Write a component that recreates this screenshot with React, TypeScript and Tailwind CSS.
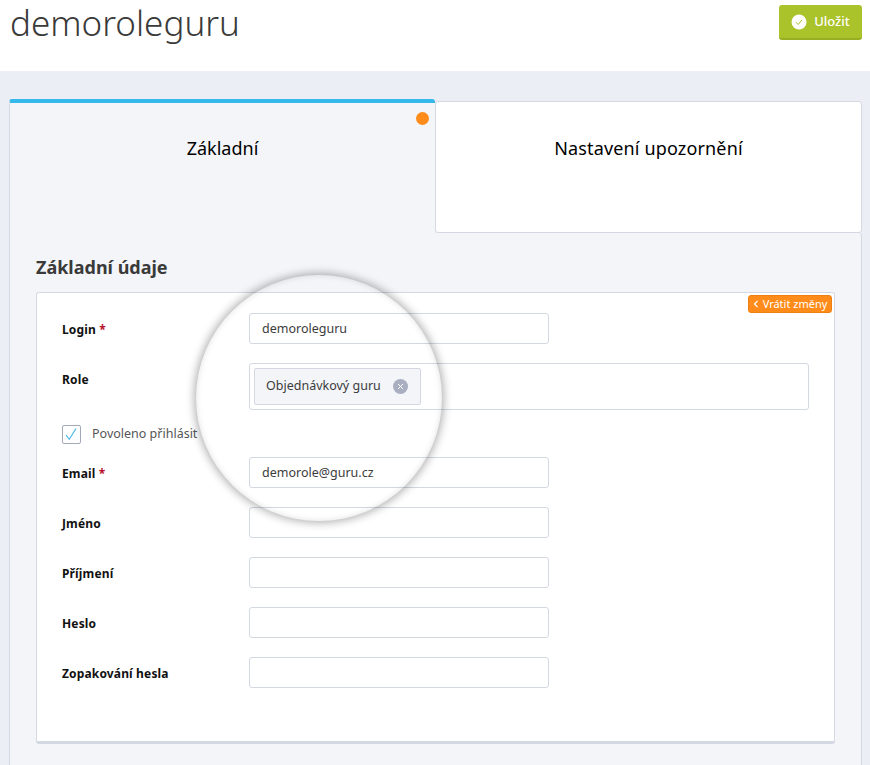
import React from "react";

function Field({ label, req, value, mt }: { label: string; req?: boolean; value?: string; mt: string }) {
  return (
    <div className={`flex items-center ${mt}`}>
      <label className="w-[187px] pl-[25px] pt-[2px] box-content shrink-0 text-[12px] font-bold text-[#111] tracking-[0.15px]">
        {label}
        {req && <span className="text-[#b8102a]"> *</span>}
      </label>
      <div className="w-[300px] h-[31px] bg-white border border-[#d3d8e2] rounded-[3px] px-3 pt-[1px] flex items-center text-[12.5px] text-[#3c3c3c]">
        {value}
      </div>
    </div>
  );
}

export default function App() {
  return (
    <div className="w-[870px] h-[765px] overflow-hidden bg-[#ebeef5] relative font-['Noto_Sans',sans-serif]">
      <header className="h-[71px] bg-white flex justify-between pl-[10px] pr-[8px]">
        <h1 className="text-[35px] leading-[46px] font-light text-[#3a3a3a]">demoroleguru</h1>
        <button className="mt-[5px] w-[83px] h-[35px] rounded-[3px] bg-[#abc32a] border-b-2 border-[#98ae22] flex items-center justify-center gap-[7px] text-[13px] font-medium text-white">
          <svg width="16" height="16" viewBox="0 0 16 16">
            <circle cx="8" cy="8" r="7.5" fill="#fff" />
            <path d="M5 8.2 7.2 10.5 11 5.8" fill="none" stroke="#abc32a" strokeWidth="1" />
          </svg>
          Uložit
        </button>
      </header>
      <div className="pr-[8px] pt-[27px] pl-[9px]">
        <div className="flex items-end h-[135px]">
          <div className="relative w-[426px] h-[134px] bg-[#f3f5f9] border-l border-[#d3d8e2] border-t-[4px] border-t-[#35b8ea] rounded-t-[3px] flex justify-center pt-[33px] text-[18px] text-black leading-[24px]">
            Základní
            <span className="absolute right-[6px] top-[9px] w-[13px] h-[13px] rounded-full bg-[#ff8c1a]" />
          </div>
          <div className="w-[427px] h-[132px] bg-white border border-[#d3d8e2] rounded-[3px] flex justify-center pt-[34px] text-[18px] tracking-[0.15px] text-black leading-[24px]">
            Nastavení upozornění
          </div>
        </div>
        <section className="h-[540px] bg-[#f3f5f9] border border-t-0 border-[#d3d8e2] rounded-tr-[3px] px-[26px]">
          <h2 className="pt-[22px] text-[18px] leading-[24px] font-bold text-[#3a3a3a]">Základní údaje</h2>
          <div className="relative mt-[13px] w-[799px] h-[452px] bg-white border border-[#d3d8e2] border-b-[3px] rounded-[3px] pt-[20px]">
            <span className="absolute right-[2px] top-[2px] h-[18px] w-[84px] rounded-[3px] bg-[#ff8c1a] border border-[#f07f12] flex items-center justify-center gap-[4px] text-[11px] text-white">
              <svg width="6" height="8" viewBox="0 0 6 8">
                <path d="M4.5 1 1.5 4 4.5 7" fill="none" stroke="#fff" strokeWidth="1.2" />
              </svg>
              Vrátit změny
            </span>
            <Field label="Login" req value="demoroleguru" mt="mt-0" />
            <div className="flex mt-[19px]">
              <label className="w-[187px] pl-[25px] pt-[1px] box-content shrink-0 text-[12px] leading-[32px] font-bold text-[#111] tracking-[0.15px]">Role</label>
              <div className="w-[560px] h-[47px] border border-[#d3d8e2] rounded-[3px] p-[4px]">
                <span className="w-[167px] h-[37px] bg-[#f3f5f9] border border-[#d3d8e2] rounded-[2px] flex items-center justify-between pl-[11px] pr-[12px] text-[12.5px] text-[#3c3c3c]">
                  Objednávkový guru
                  <svg width="15" height="15" viewBox="0 0 15 15">
                    <circle cx="7.5" cy="7.5" r="7.5" fill="#a9afc0" />
                    <path d="M5 5 10 10M10 5 5 10" stroke="#fff" strokeWidth="1" />
                  </svg>
                </span>
              </div>
            </div>
            <div className="flex items-center mt-[15px] ml-[25px] h-[19px] gap-[11px] text-[12.5px] text-[#555]">
              <span className="w-[19px] h-[19px] border border-[#a3a9b8] rounded-[2px] flex items-center justify-center">
                <svg width="13" height="13" viewBox="0 0 13 13">
                  <path d="M1 7 4.3 11.3 11 0.5" fill="none" stroke="#4db8ee" strokeWidth="1.2" />
                </svg>
              </span>
              Povoleno přihlásit
            </div>
            <Field label="Email" req value="demorole@guru.cz" mt="mt-[13px]" />
            <Field label="Jméno" mt="mt-[19px]" />
            <Field label="Příjmení" mt="mt-[19px]" />
            <Field label="Heslo" mt="mt-[19px]" />
            <Field label="Zopakování hesla" mt="mt-[19px]" />
          </div>
        </section>
      </div>
      <div className="absolute left-[196px] top-[275px] w-[246px] h-[246px] rounded-full shadow-[0_0_8px_2px_rgba(0,0,0,0.3),inset_0_0_6px_rgba(0,0,0,0.12)] pointer-events-none" />
    </div>
  );
}
